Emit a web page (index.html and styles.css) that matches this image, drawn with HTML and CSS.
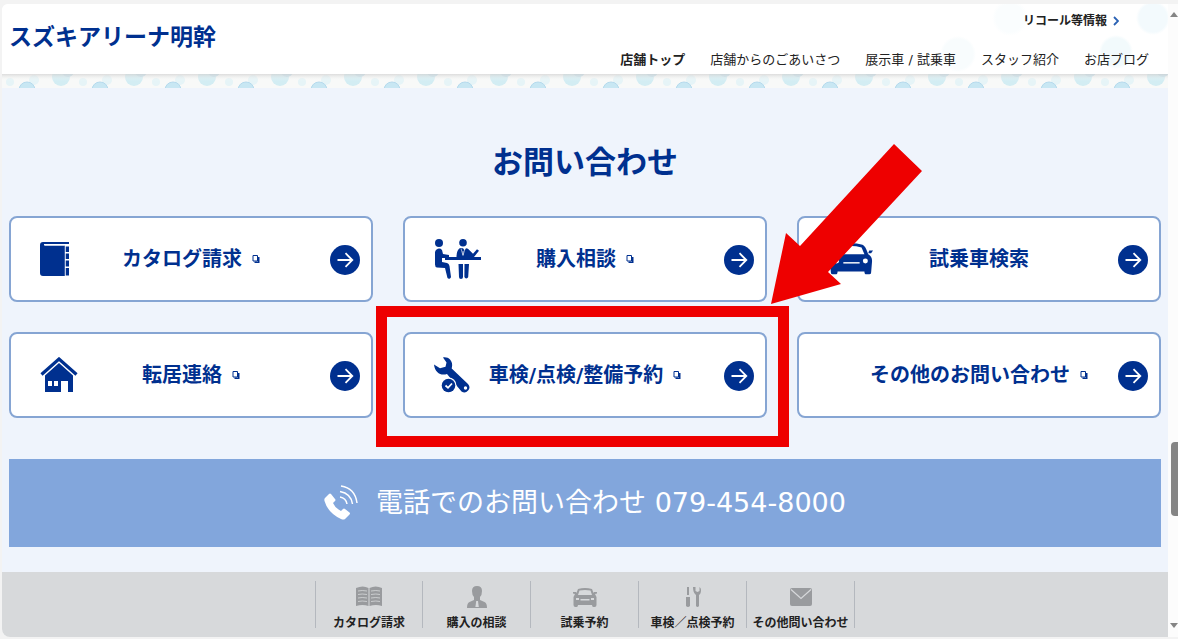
FILE: index.html
```html
<!DOCTYPE html>
<html lang="ja">
<head>
<meta charset="utf-8">
<meta name="viewport" content="width=device-width, initial-scale=1">
<title>スズキアリーナ明幹</title>
<link rel="stylesheet" href="styles.css">
</head>
<body>
<svg class="defs" aria-hidden="true">
  <symbol id="go" viewBox="0 0 30 30"><circle cx="15" cy="15" r="15" fill="#00308f"/><path d="M7.500 15H22M15.500 8.200 22.300 15l-6.800 6.800" fill="none" stroke="#fff" stroke-width="1.800"/></symbol>
  <symbol id="ext" viewBox="0 0 8 10"><path d="M1 1.500h4.500v5.500H1z" fill="#fff" stroke="#00308f" stroke-width="1"/><path d="M6 3h1.500v6H2.500V7.500H6z" fill="#00308f"/></symbol>
</svg>
<div class="window">
  <div class="page">
    <header class="header">
      <h1 class="brand">スズキアリーナ明幹</h1>
      <div class="menus">
        <a class="recall" href="#">リコール等情報
          <svg class="chevron" viewBox="0 0 6 10"><path d="M1 1l4 4-4 4" fill="none" stroke="#2a62b4" stroke-width="1.800"/></svg></a>
        <nav class="nav">
          <a class="nav-link current" href="#">店舗トップ</a>
          <a class="nav-link" href="#">店舗からのごあいさつ</a>
          <a class="nav-link" href="#">展示車 / 試乗車</a>
          <a class="nav-link" href="#">スタッフ紹介</a>
          <a class="nav-link" href="#">お店ブログ</a>
        </nav>
      </div>
    </header>
    <svg class="bubbles" aria-hidden="true">
      <defs>
        <pattern id="bubble" width="73" height="14" patternUnits="userSpaceOnUse">
          <circle cx="59" cy="3" r="9" fill="#d3edf3"/>
          <circle cx="66" cy="-3" r="6" fill="#c3e0ec"/>
          <circle cx="8" cy="8" r="4" fill="#e6f4f7"/>
          <circle cx="32" cy="6" r="5" fill="#e6f4f7"/>
          <circle cx="25" cy="16" r="8" fill="#c8e7f3" stroke="#b4d9ec"/>
        </pattern>
        <linearGradient id="shade" x2="0" y2="1"><stop offset="0" stop-color="#d0d0d0" stop-opacity=".7"/><stop offset="1" stop-color="#fff" stop-opacity="0"/></linearGradient>
      </defs>
      <rect width="100%" height="14" fill="#f8f9f8"/>
      <rect width="100%" height="14" fill="url(#bubble)"/>
      <rect width="100%" height="7" fill="url(#shade)"/>
    </svg>
    <main class="contact">
      <h2 class="heading">お問い合わせ</h2>
      <ul class="cards">
        <li class="cell"><a class="card" href="#">
          <svg class="icon" width="30" height="34" viewBox="0 0 30 34"><path d="M3 0h26v2H5v1.500h20V34H3a3 3 0 0 1-3-3V3a3 3 0 0 1 3-3z" fill="#00308f"/><path d="M4 2.700h25" stroke="#fff" stroke-width="1.400"/><path d="M25.500 4.500h3.500v5.500h-3.500zM25.500 11.500h3.500v5.500h-3.500zM25.500 18.500h3.500v6h-3.500zM25.500 26h3.500v7.500h-3.500z" fill="#00308f"/><path d="M25.200 4v30" stroke="#fff" stroke-width=".7"/></svg>
          <span class="label">カタログ請求<svg class="ext"><use href="#ext"/></svg></span>
          <svg class="go"><use href="#go"/></svg></a></li>
        <li class="cell"><a class="card" href="#">
          <svg class="icon" width="48" height="40" viewBox="0 0 48 40"><g fill="#00308f"><circle cx="5" cy="4" r="4"/><circle cx="29" cy="3.800" r="3.800"/><path d="M1 13a4 4 0 0 1 7-2l1 4 6 1v3H8v4l5 1q2 .500 2.500 3L17 38a2 2 0 0 1-3.500 1L11 29l-8-.500q-2-.500-2-3z"/><path d="M11 18h11.500q0-7 3.500-9l3 .200 1.500 2 1.500-2 2 .600 5 5 4-4.500 2 1.500-5 6.200H47v3H11z"/><path d="M24.500 25h4.500v13a2 2 0 0 1-4 0zM30.500 25H35l-.800 13a2 2 0 0 1-3.800 0z"/></g><path d="M27 9.500l2 7 2-7M29 12v4" stroke="#fff" stroke-width=".6" fill="none"/></svg>
          <span class="label">購入相談<svg class="ext"><use href="#ext"/></svg></span>
          <svg class="go"><use href="#go"/></svg></a></li>
        <li class="cell"><a class="card" href="#">
          <svg class="icon" width="46" height="34" viewBox="0 0 48 34"><path d="M1 8h4l1 3H3zM47 8h-4l-1 3h3zM12 2q12-3 24 0 3 1 6 10 4 2 4 7l-1 12q0 2-2 2h-3q-2 0-2-3H10q0 3-2 3H5q-2 0-2-2L2 19q0-5 4-7 3-9 6-10z" fill="#00308f"/><path d="M13 5q11-3 22 0l3 7H10z" fill="#fff"/><circle cx="9" cy="19" r="2.600" fill="#fff"/><circle cx="39" cy="19" r="2.600" fill="#fff"/><path d="M16 21h17" stroke="#fff" stroke-width="1.500"/></svg>
          <span class="label">試乗車検索</span>
          <svg class="go"><use href="#go"/></svg></a></li>
        <li class="cell"><a class="card" href="#">
          <svg class="icon" width="38" height="36" viewBox="0 0 38 36"><path d="M19 6l14 12.500V35h-5V24h-7v11H5V18.500z" fill="#00308f"/><path d="M2 19.500 19 4.500l17 15" fill="none" stroke="#fff" stroke-width="1"/><path d="M1.500 17.500 19 2l17.500 15.500" fill="none" stroke="#00308f" stroke-width="3.200"/><path d="M8 24h4v5H8zM14 24h4v5h-4z" fill="#fff"/></svg>
          <span class="label">転居連絡<svg class="ext"><use href="#ext"/></svg></span>
          <svg class="go"><use href="#go"/></svg></a></li>
        <li class="cell featured"><a class="card" href="#">
          <svg class="icon" width="37" height="36" viewBox="0 0 37 36"><path d="M9 .500c6-1 10 4 9 9l-.300 2L34 27a5 5 0 0 1-6.500 7.500L13 17c-6 2-12-1-13-9.500l6 3.800 5.500-1.500 1-4.300z" fill="#00308f"/><circle cx="31.500" cy="31" r="1.700" fill="#fff"/><circle cx="14.500" cy="28.500" r="8" fill="#fff"/><circle cx="14.500" cy="28.500" r="6.800" fill="#00308f"/><path d="M11.500 28.500l2.500 2.300 4-4.300" stroke="#fff" stroke-width="1.800" fill="none"/></svg>
          <span class="label">車検/点検/整備予約<svg class="ext"><use href="#ext"/></svg></span>
          <svg class="go"><use href="#go"/></svg></a>
          <span class="frame"></span>
          <svg class="pointer" viewBox="0 0 151 160" aria-hidden="true"><path d="M123 0l28 27-94 101 13 12L0 160l15-71 14 13z" fill="#ee0000"/></svg></li>
        <li class="cell"><a class="card" href="#">
          <span class="label">その他のお問い合わせ<svg class="ext"><use href="#ext"/></svg></span>
          <svg class="go"><use href="#go"/></svg></a></li>
      </ul>
      <a class="phone" href="tel:079-454-8000">
        <svg class="phone-icon" width="34" height="36" viewBox="0 0 34 36"><path d="M1 13l4-4q1-1 2 0l4 5q1 1 0 2l-2 2q2 5 8 8l2-2q1-1 2 0l4.500 3.500q1 1 0 2L21 34q-1.500 1-4 0Q4 28 .500 16q-.500-2 .500-3z" fill="#fff"/><path d="M16 12q6 1 7 7M16 6.500q11 2 12.500 12.500M17 1q14 2 16 17" fill="none" stroke="#fff" stroke-width="1.500"/></svg>
        <span class="phone-text">電話でのお問い合わせ 079-454-8000</span>
      </a>
    </main>
    <footer class="dock">
      <a class="dock-item" href="#"><svg width="28" height="22" viewBox="0 0 28 22"><path d="M1 2q7-3 12.500 0v18q-6-2-12.500 0zM14.500 2q6-3 12.500 0v18q-6-2-12.500 0z" fill="#999b9e"/><path d="M3 5q4-1 9 0M3 8.500q4-1 9 0M3 12q4-1 9 0M3 15.500q4-1 9 0M16 5q5-1 9 0M16 8.500q5-1 9 0M16 12q5-1 9 0M16 15.500q5-1 9 0" stroke="#d7d9db" stroke-width=".8" fill="none"/></svg>カタログ請求</a>
      <a class="dock-item" href="#"><svg width="20" height="22" viewBox="0 0 20 22"><path d="M10 0q5 0 5 5 0 4-2 6v3l4.500 2q2.500 1 2.500 6H0q0-5 2.500-6L7 14v-3q-2-2-2-6 0-5 5-5z" fill="#999b9e"/><path d="M9.200 15h1.800l.8 6H8.400z" fill="#d7d9db"/></svg>購入の相談</a>
      <a class="dock-item" href="#"><svg width="26" height="20" viewBox="0 0 26 20"><path d="M1 5h3l.500 1L6 2q7-2 14 0l1.500 4 .500-1h3v1.500l-2 .500 1.500 3v8q0 2-2 2h-1q-1.500 0-1.500-2H6q0 2-1.500 2h-1q-2 0-2-2v-8L3 7 1 6.500z" fill="#999b9e"/><path d="M7.500 3.500q5.500-1 11 0L20 8H6zM4 11h3v2H4zM19 11h3v2h-3zM8.500 12h9v1.500h-9z" fill="#d7d9db"/></svg>試乗予約</a>
      <a class="dock-item" href="#"><svg width="16" height="22" viewBox="0 0 16 22"><path d="M2 1h2v8H2zM1 11h4v9q-2 2-4 0zM8 1q0 5 2 7l1 1v11q1.500 2 3 0V9q2-1 2-5 0-2-1.500-3v4L12.500 6 10.500 5V1z" fill="#999b9e"/></svg>車検／点検予約</a>
      <a class="dock-item" href="#"><svg width="24" height="18" viewBox="0 0 24 18"><rect x="1" width="22" height="18" rx="2" fill="#999b9e"/><path d="M2 1.500l10 9 10-9" stroke="#d7d9db" fill="none" stroke-width="1.200"/></svg>その他問い合わせ</a>
    </footer>
  </div>
  <div class="scrollbar" aria-hidden="true"><span class="up"></span><span class="thumb"></span><span class="down"></span></div>
</div>
</body>
</html>
```
FILE: styles.css
```css
* { box-sizing: border-box; }
body {
  margin: 0;
  padding: 4px 0 2px 2px;
  background: #f3f3f3;
  color: #222;
  font-family: "DejaVu Sans", "Noto Sans CJK JP", sans-serif;
}
a { color: inherit; text-decoration: none; }
.defs { display: none; }
.window {
  display: flex;
  overflow: hidden;
  border-radius: 6px 0 0 8px;
  background: #fcfcfc;
}
.page { flex: 1; min-width: 0; }

.header {
  display: flex;
  justify-content: space-between;
  min-height: 70px;
  padding: 0 19px 0 7px;
  background:
    radial-gradient(circle at calc(100% - 15px) 14px, #f3fafd 14px, transparent 17px),
    radial-gradient(circle at calc(100% - 52px) 48px, #f2fafc 14px, transparent 17px),
    radial-gradient(circle at calc(100% - 210px) 50px, #f8fcfd 15px, transparent 18px),
    radial-gradient(circle at calc(100% - 158px) 14px, #fafdfe 14px, transparent 18px),
    #fff;
}
.brand {
  margin: 15px 0 0;
  color: #00308f;
  font-size: 23px;
  line-height: 36px;
  font-weight: 700;
}
.menus {
  display: flex;
  flex-direction: column;
  align-items: flex-end;
  gap: 19px;
  padding-top: 7px;
}
.recall {
  display: flex;
  align-items: center;
  gap: 6px;
  margin-right: 30px;
  font-size: 12px;
  line-height: 20px;
  font-weight: 700;
}
.chevron { width: 6px; height: 10px; }
.nav { display: flex; gap: 25px; }
.nav-link { font-size: 13px; line-height: 20px; white-space: nowrap; }
.current { font-weight: 700; }
.bubbles { display: block; width: 100%; height: 14px; }

.contact { padding: 48px 7px 25px; background: #eff4fc; }
.heading {
  margin: 0 0 28px;
  color: #00308f;
  font-size: 31px;
  line-height: 52px;
  font-weight: 700;
  text-align: center;
}
.cards {
  display: grid;
  grid-template-columns: repeat(3, 1fr);
  gap: 30px;
  margin: 0;
  padding: 0;
  list-style: none;
}
.cell { position: relative; }
.featured { z-index: 1; }
.card {
  display: grid;
  grid-template-columns: 1fr auto 1fr;
  align-items: center;
  min-height: 86px;
  padding: 0 11px;
  border: 2px solid #86a5d3;
  border-radius: 8px;
  background: #fff;
  color: #00308f;
}
.icon { grid-column: 1; margin-left: 18px; }
.label {
  display: flex;
  grid-column: 2;
  align-items: center;
  gap: 10px;
  font-size: 20px;
  line-height: 28px;
  font-weight: 700;
  white-space: nowrap;
}
.ext { width: 8px; height: 10px; }
.go { grid-column: 3; justify-self: end; width: 30px; height: 30px; margin-top: 2px; }
.frame {
  position: absolute;
  inset: -26px -22px -29px -27px;
  border: 11px solid #ee0000;
  pointer-events: none;
}
.pointer {
  position: absolute;
  top: -188px;
  right: -155px;
  width: 151px;
  height: 160px;
  pointer-events: none;
}
.phone {
  display: flex;
  align-items: center;
  justify-content: center;
  gap: 18px;
  min-height: 88px;
  margin-top: 41px;
  background: #82a6dc;
  color: #fff;
}
.phone-text { font-size: 27px; line-height: 40px; }

.dock {
  display: flex;
  justify-content: center;
  min-height: 65px;
  padding: 9px 0;
  background: #d7d9db;
}
.dock-item {
  display: grid;
  grid-template-rows: 32px 20px;
  place-items: center;
  width: 108px;
  height: 47px;
  border-right: 1px solid #b4b8be;
  font-size: 12px;
  line-height: 20px;
  font-weight: 700;
  white-space: nowrap;
}
.dock-item:first-child { border-left: 1px solid #b4b8be; }

.scrollbar {
  display: grid;
  grid-template-rows: 438px 74px 1fr;
  justify-items: end;
  width: 10px;
}
.thumb { width: 7px; border-radius: 4px 0 0 4px; background: #858585; }
.up, .down { width: 8px; height: 5px; background: #858585; }
.up { margin-top: 8px; clip-path: polygon(50% 0, 100% 100%, 0 100%); }
.down { align-self: end; margin-bottom: 9px; clip-path: polygon(0 0, 100% 0, 50% 100%); }
```
